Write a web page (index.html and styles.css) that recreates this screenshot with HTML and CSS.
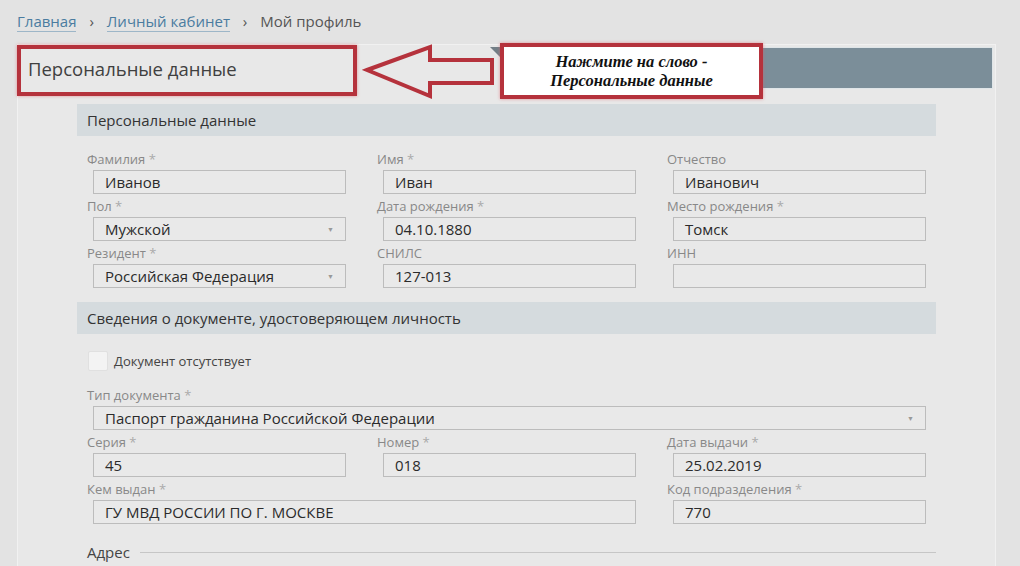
FILE: index.html
```html
<!DOCTYPE html>
<html>
<head>
    <title>Мой профиль</title>
    <link rel="stylesheet" href="styles.css">
</head>
<body>
    <div class="breadcrumbs">
        <a href="#">Главная</a>
        <span class="sep">›</span>
        <a href="#">Личный кабинет</a>
        <span class="sep">›</span>
        <span class="current">Мой профиль</span>
    </div>

    <div class="card">
        <div class="tabs">
            <div class="tab">Персональные данные</div>
            <div class="tabs-fill"></div>
        </div>

        <div class="card-body">
            <div class="section-title">Персональные данные</div>
            <div class="fields">
                <div class="field">
                    <div class="label">Фамилия <span class="req">*</span></div>
                    <div class="input">Иванов</div>
                </div>
                <div class="field">
                    <div class="label">Имя <span class="req">*</span></div>
                    <div class="input">Иван</div>
                </div>
                <div class="field">
                    <div class="label">Отчество</div>
                    <div class="input">Иванович</div>
                </div>
                <div class="field">
                    <div class="label">Пол <span class="req">*</span></div>
                    <div class="input select">Мужской</div>
                </div>
                <div class="field">
                    <div class="label">Дата рождения <span class="req">*</span></div>
                    <div class="input">04.10.1880</div>
                </div>
                <div class="field">
                    <div class="label">Место рождения <span class="req">*</span></div>
                    <div class="input">Томск</div>
                </div>
                <div class="field">
                    <div class="label">Резидент <span class="req">*</span></div>
                    <div class="input select">Российская Федерация</div>
                </div>
                <div class="field">
                    <div class="label">СНИЛС</div>
                    <div class="input">127-013</div>
                </div>
                <div class="field">
                    <div class="label">ИНН</div>
                    <div class="input"></div>
                </div>
            </div>

            <div class="section-title second">Сведения о документе, удостоверяющем личность</div>
            <label class="check">
                <span class="box"></span>
                <span>Документ отсутствует</span>
            </label>
            <div class="fields">
                <div class="field wide3">
                    <div class="label">Тип документа <span class="req">*</span></div>
                    <div class="input select">Паспорт гражданина Российской Федерации</div>
                </div>
                <div class="field">
                    <div class="label">Серия <span class="req">*</span></div>
                    <div class="input">45</div>
                </div>
                <div class="field">
                    <div class="label">Номер <span class="req">*</span></div>
                    <div class="input">018</div>
                </div>
                <div class="field">
                    <div class="label">Дата выдачи <span class="req">*</span></div>
                    <div class="input">25.02.2019</div>
                </div>
                <div class="field wide2">
                    <div class="label">Кем выдан <span class="req">*</span></div>
                    <div class="input">ГУ МВД РОССИИ ПО Г. МОСКВЕ</div>
                </div>
                <div class="field">
                    <div class="label">Код подразделения <span class="req">*</span></div>
                    <div class="input">770</div>
                </div>
            </div>

            <div class="legend">
                <span>Адрес</span>
                <span class="legend-line"></span>
            </div>
        </div>
    </div>

    <!-- подсказка поверх страницы -->
    <div class="hint-frame"></div>
    <svg class="hint-arrow" width="136" height="60" viewBox="0 0 136 60">
        <polygon points="5,28 68,5 68,18 130,18 130,41 68,41 68,54" fill="none" stroke="#b5323c" stroke-width="4" stroke-linejoin="miter"/>
    </svg>
    <div class="hint-note">Нажмите на слово -<br>Персональные данные</div>
</body>
</html>
```

FILE: styles.css
```css
body {
    margin: 0;
    background: #e3e3e3;
    font-family: "Open Sans", "Noto Sans", sans-serif;
    color: #333;
    height: 566px;
    overflow: hidden;
    position: relative;
}
.breadcrumbs {
    padding: 10px 17px 0;
    height: 44px;
    box-sizing: border-box;
    font-size: 15px;
    line-height: 22px;
    color: #555;
}
.breadcrumbs a {
    color: #4a7ca0;
    text-decoration: none;
    border-bottom: 1px solid #9db6c8;
}
.breadcrumbs .sep {
    margin: 0 9px;
    color: #555;
}
.card {
    margin-left: 17px;
    width: 979px;
    box-sizing: border-box;
    background: #e8e8e8;
    border: 1px solid #f1f1f1;
    border-bottom: none;
    padding-top: 2px;
    height: 600px;
}
.tabs {
    display: flex;
    height: 42px;
    margin-right: 2px;
}
.tab {
    width: 472px;
    padding-left: 10px;
    font-size: 18.5px;
    line-height: 44px;
    color: #404040;
}
.tabs-fill {
    flex: 1;
    background: #7b8e99;
    border: 1px solid #dfe5e8;
    position: relative;
}
.tabs-fill:before {
    content: "";
    position: absolute;
    left: -11px;
    top: -1px;
    border-top: 10px solid #737f87;
    border-left: 10px solid transparent;
}
.card-body {
    padding: 15px 59px 0;
}
.section-title {
    height: 32px;
    background: #d5dbde;
    padding-left: 10px;
    font-size: 15px;
    line-height: 32px;
    color: #333;
}
.section-title.second {
    margin-top: 10px;
}
.fields {
    display: grid;
    grid-template-columns: 290px 290px 1fr;
    padding: 15px 10px 0;
}
.field {
    margin-bottom: 4px;
}
.field.wide2 {
    grid-column: span 2;
}
.field.wide3 {
    grid-column: span 3;
}
.label {
    font-size: 13px;
    line-height: 16px;
    color: #888;
    margin-bottom: 3px;
}
.req {
    color: #aaa;
}
.input {
    margin-left: 6px;
    width: 253px;
    height: 24px;
    box-sizing: border-box;
    border: 1px solid #bcbcbc;
    background: #e9e9e9;
    padding-left: 11px;
    font-size: 15px;
    line-height: 22px;
    color: #2b2b2b;
    position: relative;
}
.wide2 .input {
    width: 543px;
}
.wide3 .input {
    width: 833px;
}
.select:after {
    content: "▼";
    position: absolute;
    right: 11px;
    top: 1px;
    font-size: 7px;
    color: #999;
}
.check {
    display: flex;
    align-items: center;
    margin: 17px 0 0 11px;
    font-size: 13px;
    color: #444;
}
.check .box {
    width: 20px;
    height: 20px;
    box-sizing: border-box;
    background: #f3f3f3;
    border: 1px solid #e0e0e0;
    border-radius: 2px;
    margin-right: 6px;
}
.check + .fields {
    padding-top: 16px;
}
.legend {
    display: flex;
    align-items: center;
    margin: 14px 0 0 10px;
    font-size: 15px;
    line-height: 20px;
    color: #444;
}
.legend-line {
    flex: 1;
    height: 1px;
    background: #c6c6c6;
    margin-left: 10px;
}
.hint-frame {
    position: absolute;
    left: 17px;
    top: 45px;
    width: 340px;
    height: 51px;
    box-sizing: border-box;
    border: 4px solid #b5323c;
    box-shadow: 0 0 3px rgba(225, 90, 100, 0.6);
}
.hint-arrow {
    position: absolute;
    left: 362px;
    top: 42px;
}
.hint-note {
    position: absolute;
    left: 500px;
    top: 43px;
    width: 263px;
    height: 56px;
    box-sizing: border-box;
    border: 4px solid #b5323c;
    box-shadow: 0 0 3px rgba(225, 90, 100, 0.6);
    background: #fff;
    text-align: center;
    font-family: "Liberation Serif", serif;
    font-style: italic;
    font-weight: bold;
    font-size: 16.5px;
    line-height: 19px;
    padding-top: 5px;
    color: #111;
}
```
